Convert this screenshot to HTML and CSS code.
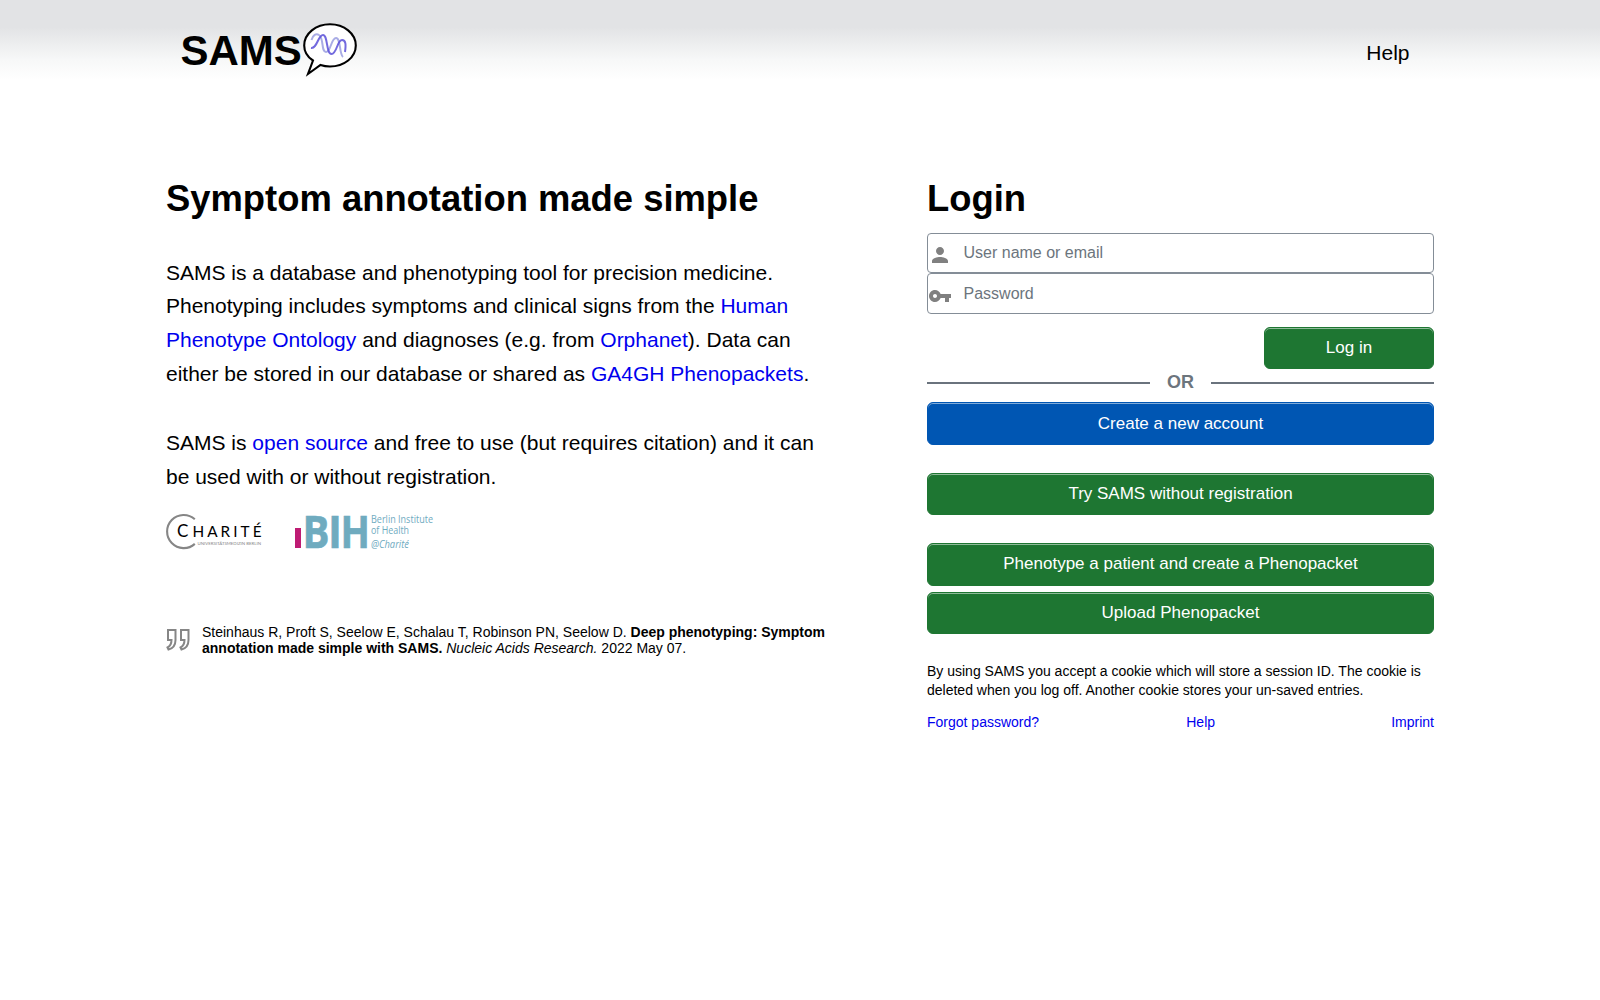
FILE: index.html
```html
<!DOCTYPE html>
<html lang="en">
<head>
<meta charset="utf-8">
<meta name="viewport" content="width=device-width, initial-scale=1.0">
<title>SAMS</title>
<link rel="stylesheet" href="styles.css">
</head>

<body>
<header class="header">
	<div class="header-inner">
		<a class="logo" href="#">
			<span>SAMS</span>
			<svg width="54" height="54" viewBox="0 0 54 54">
				<path d="M10 37.500C4.500 34 1.200 29 1.200 22.500C1.200 10.500 13 1.200 27 1.200S52.800 10.500 52.800 22.500S41 43.500 27 43.500Q22 43.500 17.500 42L5 51Z" fill="#fff" stroke="#000" stroke-width="2.100"/>
				<path class="dna-light" d="M8.500 17C10 12 13 10 16 12C21 15 18 29 23 29S28 15 33 15S36 31 40 34"/>
				<path class="dna" d="M8 25C14 26 15 12 20 12C25 12 23 31 28.500 31C34 31 34 17 39 17C43 17 43 22 42 29"/>
			</svg>
		</a>
		<a class="nav-link" href="#">Help</a>
	</div>
</header>

<main class="main">
	<section class="intro">
		<h1>Symptom annotation made simple</h1>
		<p>SAMS is a database and phenotyping tool for precision medicine. Phenotyping includes symptoms and clinical signs from the <a href="#">Human Phenotype Ontology</a> and diagnoses (e.g. from <a href="#">Orphanet</a>). Data can either be stored in our database or shared as <a href="#">GA4GH Phenopackets</a>.</p>
		<p>SAMS is <a href="#">open source</a> and free to use (but requires citation) and it can be used with or without registration.</p>
		<div class="partners">
			<svg width="97" height="37" viewBox="0 0 97 37">
				<path d="M28.800 6.200A16.600 16.600 0 1 0 28.800 30.900" fill="none" stroke="#868686" stroke-width="2.100"/>
				<text class="charite-c" x="11" y="24">C</text>
				<text class="charite" x="26.500" y="24" textLength="69">HARITÉ</text>
				<text class="charite-sub" x="31.500" y="31.500" textLength="63.500" lengthAdjust="spacingAndGlyphs">UNIVERSITÄTSMEDIZIN BERLIN</text>
			</svg>
			<svg width="140" height="37" viewBox="0 0 140 37">
				<rect x="0" y="15" width="6" height="20" fill="#be1b73"/>
				<g class="bih">
					<text x="7.500" y="34.500" textLength="27" lengthAdjust="spacingAndGlyphs">B</text>
					<text x="33" y="34.500" textLength="14" lengthAdjust="spacingAndGlyphs">I</text>
					<text x="45.500" y="34.500" textLength="29.500" lengthAdjust="spacingAndGlyphs">H</text>
				</g>
				<g class="bih-sub">
					<text x="76" y="9.500" textLength="62" lengthAdjust="spacingAndGlyphs">Berlin Institute</text>
					<text x="76" y="20.500" textLength="38" lengthAdjust="spacingAndGlyphs">of Health</text>
					<text class="bih-at" x="76" y="34.500" textLength="38" lengthAdjust="spacingAndGlyphs">@Charité</text>
				</g>
			</svg>
		</div>
		<div class="citation">
			<svg width="24" height="24" viewBox="0 0 24 24" fill="none" stroke="#868686" stroke-width="2">
				<path d="M2 2H9.500V12C9.500 17 6.500 20.500 2.500 21.500L1.500 19.500C4.500 18 5.500 15.500 5.500 12H2Z"/>
				<path d="M15 2H22.500V12C22.500 17 19.500 20.500 15.500 21.500L14.500 19.500C17.500 18 18.500 15.500 18.500 12H15Z"/>
			</svg>
			<div>Steinhaus R, Proft S, Seelow E, Schalau T, Robinson PN, Seelow D. <b>Deep phenotyping: Symptom annotation made simple with SAMS.</b> <i>Nucleic Acids Research.</i> 2022 May 07.</div>
		</div>
	</section>

	<section class="login">
		<h1>Login</h1>
		<form>
			<label class="field">
				<svg width="24" height="24" viewBox="0 0 24 24"><path d="M12 12c2.210 0 4-1.790 4-4s-1.790-4-4-4-4 1.790-4 4 1.790 4 4 4zm0 2c-2.670 0-8 1.340-8 4v2h16v-2c0-2.660-5.330-4-8-4z"/></svg>
				<input type="text" placeholder="User name or email">
			</label>
			<label class="field field-password">
				<svg width="24" height="24" viewBox="0 0 24 24"><path d="M12.650 10C11.830 7.670 9.610 6 7 6c-3.310 0-6 2.690-6 6s2.690 6 6 6c2.610 0 4.830-1.670 5.650-4H17v4h4v-4h2v-4H12.650zM7 14c-1.100 0-2-.9-2-2s.9-2 2-2 2 .9 2 2-.9 2-2 2z"/></svg>
				<input type="password" placeholder="Password">
			</label>
			<button type="button" class="btn btn-login">Log in</button>
		</form>
		<div class="or"><span>OR</span></div>
		<button type="button" class="btn btn-blue">Create a new account</button>
		<button type="button" class="btn btn-try">Try SAMS without registration</button>
		<button type="button" class="btn btn-phenotype">Phenotype a patient and create a Phenopacket</button>
		<button type="button" class="btn btn-upload">Upload Phenopacket</button>
		<p class="cookies">By using SAMS you accept a cookie which will store a session ID. The cookie is deleted when you log off. Another cookie stores your un-saved entries.</p>
		<nav class="links">
			<a href="#">Forgot password?</a>
			<a class="link-help" href="#">Help</a>
			<a href="#">Imprint</a>
		</nav>
	</section>
</main>
</body>
</html>
```

FILE: styles.css
```css
* {
	box-sizing: border-box;
}
body {
	margin: 0;
	font-family: "Liberation Sans", Arial, sans-serif;
	font-size: 21px;
	line-height: 33.7px;
	color: #000;
	background: #fff;
}
a {
	color: #0000ee;
	text-decoration: none;
}
svg {
	display: block;
	flex: none;
	overflow: visible;
}
.header {
	height: 80px;
	background: linear-gradient(#e2e3e5 0, #e2e3e5 27px, #f7f8f8 60px, #fff 80px);
}
.header-inner {
	width: 1268px;
	margin: auto;
	padding: 23px 24.500px 0 14.500px;
	display: flex;
	justify-content: space-between;
}
.logo {
	display: flex;
	gap: 1px;
	color: #000;
	font-size: 42px;
	font-weight: bold;
	line-height: 56px;
}
.dna,
.dna-light {
	fill: none;
	stroke: #5a50d8;
	stroke-width: 2;
	opacity: .85;
}
.dna-light {
	stroke: #9a9ee0;
}
.nav-link {
	color: #000;
	line-height: 60px;
}
.main {
	width: 1268px;
	margin: auto;
	padding-top: 97px;
	display: flex;
	justify-content: space-between;
}
.intro {
	width: 668px;
}
.login {
	width: 507px;
}
h1 {
	margin: 0;
	font-size: 36.400px;
	line-height: 44px;
}
.intro p {
	margin: 35.500px 0;
}
.intro h1 + p {
	margin-top: 34.500px;
}
.partners {
	display: flex;
	gap: 32px;
	margin-top: -16px;
}
.charite {
	font: 15.300px Lato, sans-serif;
}
.charite-c {
	font: 17px Lato, sans-serif;
}
.charite-sub {
	font: 4.500px Lato, sans-serif;
	fill: #868686;
}
.bih {
	font: bold 45.500px "Open Sans", sans-serif;
	fill: #6fabbf;
	stroke: #6fabbf;
	stroke-width: .6;
}
.bih-sub {
	font: 500 10.800px "Open Sans", sans-serif;
	fill: #6fabbf;
}
.bih-at {
	font-style: italic;
}
.citation {
	display: flex;
	gap: 12px;
	margin-top: 74px;
	font-size: 14px;
	line-height: 16px;
}
.citation svg {
	margin-top: 4px;
}
form {
	display: flex;
	flex-direction: column;
	margin-top: 12px;
}
.field {
	display: flex;
	height: 40px;
	border: 1px solid #848d97;
	border-radius: 4px;
}
.field-password {
	height: 41px;
}
.field svg {
	fill: #808080;
	margin-top: 9px;
}
.field-password svg {
	margin-top: 10px;
}
.field input {
	flex: 1;
	border: 0;
	padding: 0 0 0 11.500px;
	background: none;
	font: 16px "Liberation Sans", Arial, sans-serif;
}
.field input::placeholder {
	color: #6c757d;
}
.btn {
	display: block;
	width: 100%;
	height: 42.400px;
	padding: 0;
	border: 1px solid #1e7632;
	border-radius: 6px;
	background: #1e7632;
	box-shadow: inset 0 1px 0 rgba(255,255,255,.5);
	color: #fff;
	font: 17px "Liberation Sans", Arial, sans-serif;
}
.btn-login {
	width: 170px;
	margin: 13px 0 0 auto;
}
.btn-blue {
	border-color: #0056b3;
	background: #0056b3;
}
.btn-try,
.btn-phenotype {
	margin-top: 28px;
}
.btn-upload {
	margin-top: 6.400px;
}
.or {
	display: flex;
	align-items: center;
	gap: 17px;
	height: 26px;
	margin: 1px 0 6px;
	color: #6c757d;
	font-size: 18px;
	font-weight: bold;
}
.or span {
	padding-bottom: 2px;
}
.or::before,
.or::after {
	content: "";
	flex: 1;
	height: 2px;
	background: #6a737d;
}
.cookies {
	margin: 28px 0 0;
	font-size: 14px;
	line-height: 19px;
}
.links {
	display: flex;
	justify-content: space-between;
	margin-top: 13px;
	font-size: 14px;
	line-height: 19px;
}
.link-help {
	margin-right: 29px;
}
```
